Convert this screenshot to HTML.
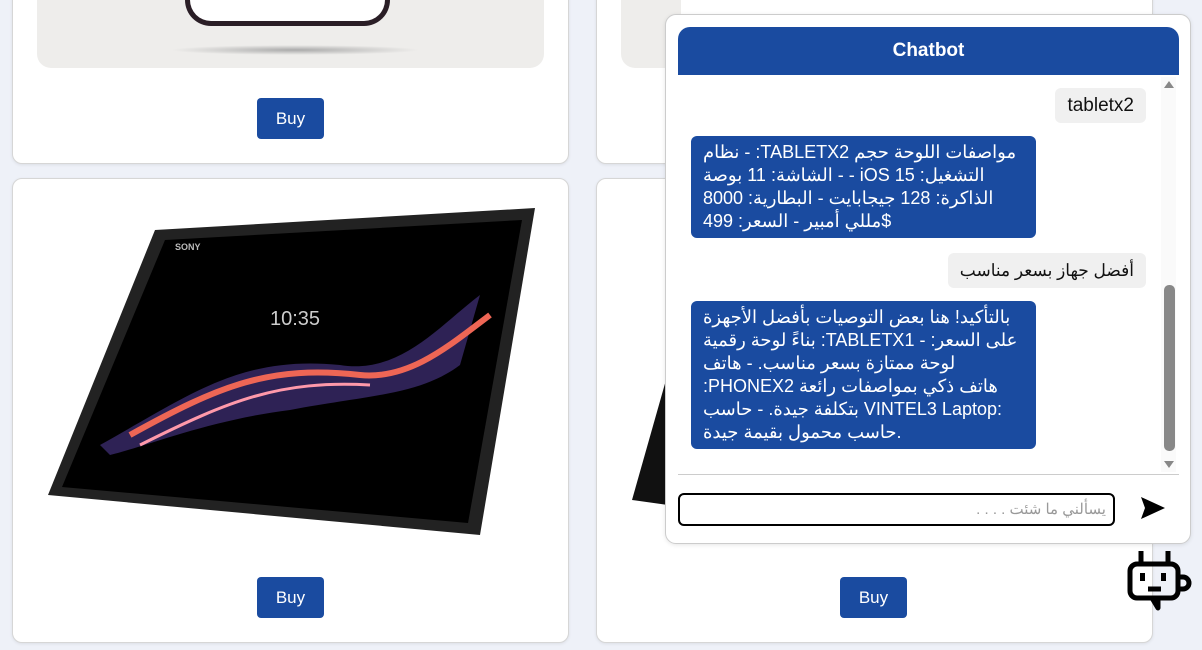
<!DOCTYPE html>
<html><head><meta charset="utf-8"><style>
*{box-sizing:border-box;margin:0;padding:0}
body{width:1202px;height:650px;overflow:hidden;background:#eef1f8;font-family:"Liberation Sans","Noto Sans CJK SC",sans-serif;position:relative}
.card{position:absolute;background:#fff;border:1px solid #d6d6d6;border-radius:10px;box-shadow:0 1px 3px rgba(0,0,0,.08)}
.buy{position:absolute;background:#1a4ba0;color:#fff;font-size:17px;border-radius:4px;width:67px;height:41px;line-height:41px;text-align:center}
.gray{position:absolute;background:#eeedeb;border-radius:0 0 14px 14px}
#chat{position:absolute;left:665px;top:14px;width:526px;height:530px;background:#fff;border:1px solid #ccc;border-radius:11px;box-shadow:0 1px 4px rgba(0,0,0,.1)}
#hdr{position:absolute;left:12px;top:12px;width:501px;height:48px;background:#1a4ba0;border-radius:12px 12px 0 0;color:#fff;font-weight:bold;font-size:19px;text-align:center;line-height:48px}
.u{position:absolute;background:#f0f0f0;border-radius:6px;font-size:19px;color:#111;padding:0 12px;height:35px;line-height:35px}
.b{position:absolute;left:25px;width:345px;background:#1a4ba0;border-radius:6px;color:#fff;font-size:18px;line-height:23px;direction:ltr;text-align:left;padding:5px 12px}
</style></head><body>
<div class="card" style="left:12px;top:-20px;width:557px;height:184px"></div>
<div class="gray" style="left:37px;top:0;width:507px;height:68px"></div>
<div style="position:absolute;left:185px;top:-10px;width:205px;height:36px;border:5px solid #2a1e26;border-top:none;border-radius:0 0 26px 26px;background:#fff"></div>
<div style="position:absolute;left:170px;top:45px;width:250px;height:10px;background:radial-gradient(ellipse,#aaa,transparent 70%)"></div>
<div class="buy" style="left:257px;top:98px">Buy</div>
<div class="card" style="left:596px;top:-20px;width:557px;height:184px"></div>
<div class="gray" style="left:621px;top:0;width:60px;height:68px"></div>

<div class="card" style="left:12px;top:178px;width:557px;height:465px"></div>
<svg style="position:absolute;left:40px;top:205px" width="505" height="340">
<polygon points="115,25 495,3 440,330 8,290" fill="#222"/>
<polygon points="125,35 482,15 428,318 22,282" fill="#000"/>
<path d="M60,240 C150,190 200,150 300,160 C360,170 400,120 440,90 L420,160 C380,190 330,190 250,205 C170,215 110,240 70,250Z" fill="#3a2a6a" opacity=".8"/>
<path d="M90,230 C180,180 230,160 320,170 C370,175 410,140 450,110" stroke="#e65" stroke-width="6" fill="none"/>
<path d="M100,240 C190,195 240,175 330,180" stroke="#f9a" stroke-width="3" fill="none"/>
<text x="230" y="120" fill="#ccc" font-size="20">10:35</text>
<text x="135" y="45" fill="#bbb" font-size="9" font-weight="bold">SONY</text>
</svg>
<div class="buy" style="left:257px;top:577px">Buy</div>

<div class="card" style="left:596px;top:178px;width:557px;height:465px"></div>
<svg style="position:absolute;left:628px;top:380px" width="40" height="130"><polygon points="38,0 40,125 4,120" fill="#111"/></svg>
<div class="buy" style="left:840px;top:577px">Buy</div>

<div id="chat">
<div id="hdr">Chatbot</div>
<div class="u" style="right:44px;top:73px">tabletx2</div>
<div class="b" style="top:121px">نظام - :TABLETX2 مواصفات اللوحة حجم الشاشة: 11 بوصة - - iOS 15 :التشغيل الذاكرة: 128 جيجابايت - البطارية: 8000 مللي أمبير - السعر: 499$</div>
<div class="u" style="right:44px;top:238px;font-size:17px">أفضل جهاز بسعر مناسب</div>
<div class="b" style="top:286px">بالتأكيد! هنا بعض التوصيات بأفضل الأجهزة بناءً لوحة رقمية :TABLETX1 على السعر: - لوحة ممتازة بسعر مناسب. - هاتف :PHONEX2 هاتف ذكي بمواصفات رائعة بتكلفة جيدة. - حاسب VINTEL3 Laptop: حاسب محمول بقيمة جيدة.</div>
<div style="position:absolute;left:495px;top:62px;width:15px;height:395px;background:#fafafa"></div>
<div style="position:absolute;left:498px;top:66px;border:5px solid transparent;border-bottom:7px solid #888;border-top:0"></div>
<div style="position:absolute;left:498px;top:446px;border:5px solid transparent;border-top:7px solid #888;border-bottom:0"></div>
<div style="position:absolute;left:498px;top:270px;width:11px;height:166px;background:#888;border-radius:5px"></div>
<div style="position:absolute;left:12px;top:459px;width:501px;height:1px;background:#ccc"></div>
<div style="position:absolute;left:12px;top:478px;width:437px;height:33px;border:2px solid #000;border-radius:6px;direction:rtl;font-size:15px;color:#999;line-height:29px;padding-right:7px">يسألني ما شئت . . . .</div>
<svg style="position:absolute;left:474px;top:481px" width="26" height="24" viewBox="0 0 26 24"><path d="M1,1 L25,12 L1,23 L5,12Z" fill="#000"/></svg>
</div>
<svg style="position:absolute;left:1127px;top:550px" width="66" height="66" viewBox="0 0 66 66"><g fill="none" stroke="#000" stroke-width="5" stroke-linejoin="round"><path d="M14,1 V14 M41,1 V14"/><rect x="3" y="14" width="48" height="34" rx="7"/><path d="M51,27 H56 A6,6 0 0 1 56,39 H51"/><path d="M25,48 L31,58 L31,48"/><path d="M21,39 H34"/></g><rect x="13" y="23" width="5" height="8" fill="#000"/><rect x="34" y="23" width="5" height="8" fill="#000"/></svg>
</body></html>
